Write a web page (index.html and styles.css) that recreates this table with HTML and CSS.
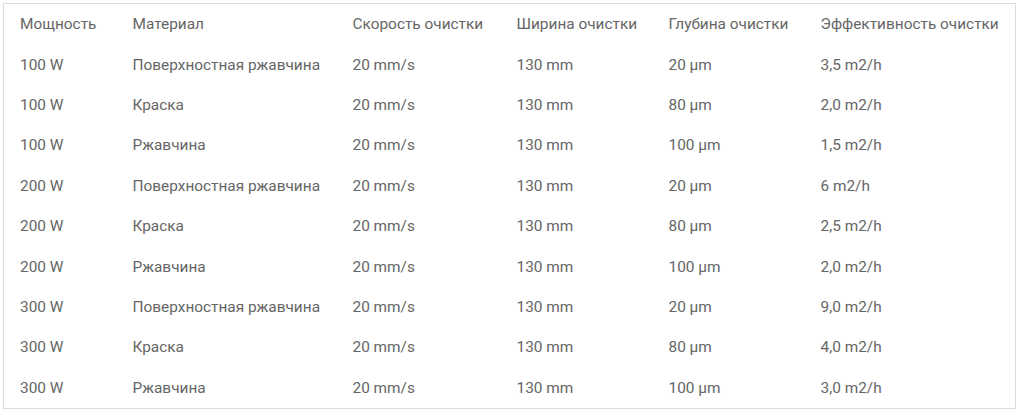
FILE: index.html
```html
<!DOCTYPE html>
<html lang="ru">
<head>
<meta charset="utf-8">
<link rel="stylesheet" href="styles.css">
</head>
<body>
<div class="wrap">
<table class="specs">
  <colgroup>
    <col class="c1"><col class="c2"><col class="c3"><col class="c4"><col class="c5"><col class="c6">
  </colgroup>
  <thead>
    <tr><th>Мощность</th><th>Материал</th><th>Скорость очистки</th><th>Ширина очистки</th><th>Глубина очистки</th><th>Эффективность очистки</th></tr>
  </thead>
  <tbody>
    <tr><td>100 W</td><td>Поверхностная ржавчина</td><td>20 mm/s</td><td>130 mm</td><td>20 μm</td><td>3,5 m2/h</td></tr>
    <tr><td>100 W</td><td>Краска</td><td>20 mm/s</td><td>130 mm</td><td>80 μm</td><td>2,0 m2/h</td></tr>
    <tr><td>100 W</td><td>Ржавчина</td><td>20 mm/s</td><td>130 mm</td><td>100 μm</td><td>1,5 m2/h</td></tr>
    <tr><td>200 W</td><td>Поверхностная ржавчина</td><td>20 mm/s</td><td>130 mm</td><td>20 μm</td><td>6 m2/h</td></tr>
    <tr><td>200 W</td><td>Краска</td><td>20 mm/s</td><td>130 mm</td><td>80 μm</td><td>2,5 m2/h</td></tr>
    <tr><td>200 W</td><td>Ржавчина</td><td>20 mm/s</td><td>130 mm</td><td>100 μm</td><td>2,0 m2/h</td></tr>
    <tr><td>300 W</td><td>Поверхностная ржавчина</td><td>20 mm/s</td><td>130 mm</td><td>20 μm</td><td>9,0 m2/h</td></tr>
    <tr><td>300 W</td><td>Краска</td><td>20 mm/s</td><td>130 mm</td><td>80 μm</td><td>4,0 m2/h</td></tr>
    <tr><td>300 W</td><td>Ржавчина</td><td>20 mm/s</td><td>130 mm</td><td>100 μm</td><td>3,0 m2/h</td></tr>
  </tbody>
</table>
</div>
</body>
</html>
```

FILE: styles.css
```css
html, body {
  margin: 0;
  padding: 0;
  background: #ffffff;
}
.wrap {
  padding: 3px 1px 0 3px;
}
.specs {
  width: 1013px;
  border-collapse: collapse;
  table-layout: fixed;
  border: 1px solid #dcdcdc;
  font-family: Roboto, "Liberation Sans", sans-serif;
  font-size: 15.4px;
  color: #666666;
}
.c1 { width: 113px; }
.c2 { width: 220px; }
.c3 { width: 164px; }
.c4 { width: 152px; }
.c5 { width: 152px; }
.c6 { width: auto; }
.specs th,
.specs td {
  text-align: left;
  font-weight: normal;
  padding: 0 0 0 16px;
  height: 40.4px;
  line-height: 20px;
  white-space: nowrap;
  vertical-align: middle;
}
```
